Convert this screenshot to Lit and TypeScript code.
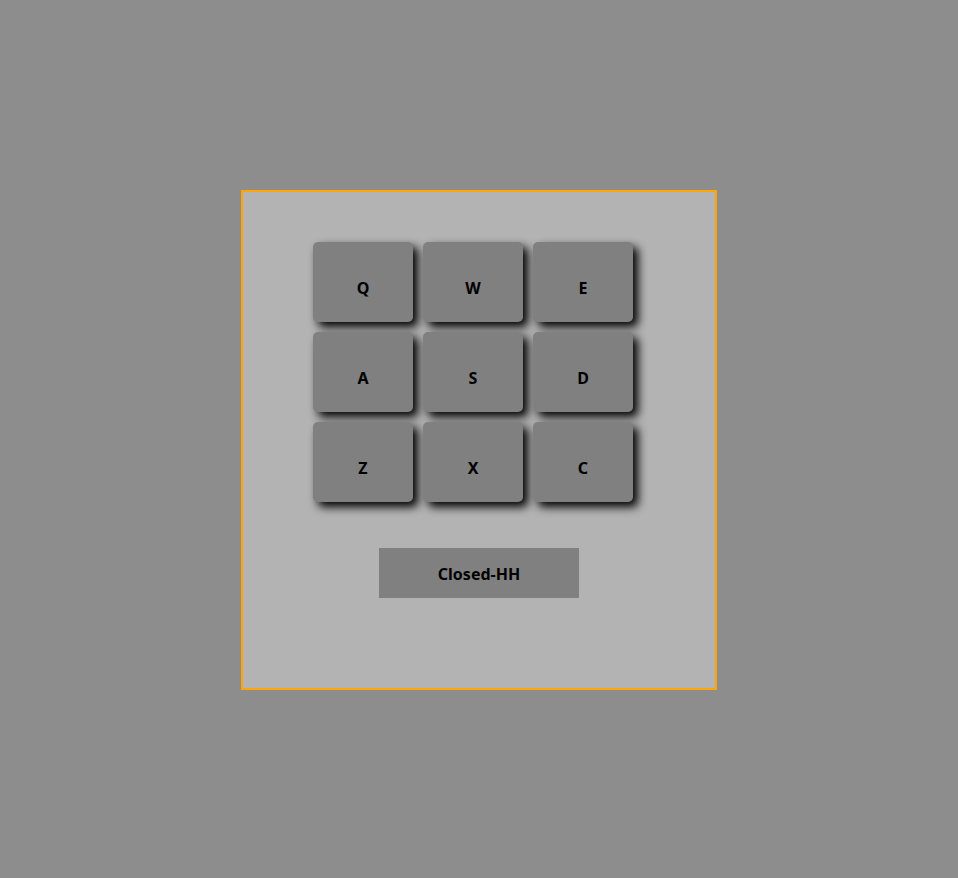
import { LitElement, html, css } from "lit";
import { customElement, state } from "lit/decorators.js";

const PADS: Record<string, string> = {
  Q: "Heater-1", W: "Heater-2", E: "Heater-3",
  A: "Heater-4", S: "Clap", D: "Open-HH",
  Z: "Kick-n'-Hat", X: "Kick", C: "Closed-HH",
};

@customElement("app-root")
export class AppRoot extends LitElement {
  @state() private sound = "Closed-HH";

  static styles = css`
    :host {
      box-sizing: border-box;
      display: flex;
      align-items: center;
      justify-content: center;
      min-height: 100vh;
      padding-top: 2px;
      background: #8d8d8d;
      color: #000;
      font-family: "Noto Sans", "Open Sans", sans-serif;
      font-size: 16px;
    }
    .machine {
      box-sizing: border-box;
      display: flex;
      flex-direction: column;
      align-items: center;
      width: 476px;
      max-width: 100%;
      padding: 50px 0 90px;
      border: 2px solid #ffa500;
      background: #b3b3b3;
    }
    .pads {
      display: grid;
      grid-template-columns: repeat(3, 100px);
      grid-auto-rows: 80px;
      gap: 10px;
      margin: 0 12px 46px 0;
    }
    .pad {
      padding: 12px 0 0;
      border: 0;
      border-radius: 5px;
      background: #808080;
      box-shadow: 5px 5px 10px #000;
      color: inherit;
      font: inherit;
      font-weight: 700;
      cursor: pointer;
    }
    .display {
      box-sizing: border-box;
      display: flex;
      align-items: center;
      justify-content: center;
      width: 200px;
      height: 50px;
      padding-top: 2px;
      background: #808080;
      font-weight: 700;
    }
  `;

  render() {
    return html`
      <main class="machine">
        <div class="pads">
          ${Object.entries(PADS).map(
            ([key, name]) => html`
              <button class="pad" type="button" @click=${() => (this.sound = name)}>${key}</button>
            `
          )}
        </div>
        <output class="display">${this.sound}</output>
      </main>
    `;
  }
}
